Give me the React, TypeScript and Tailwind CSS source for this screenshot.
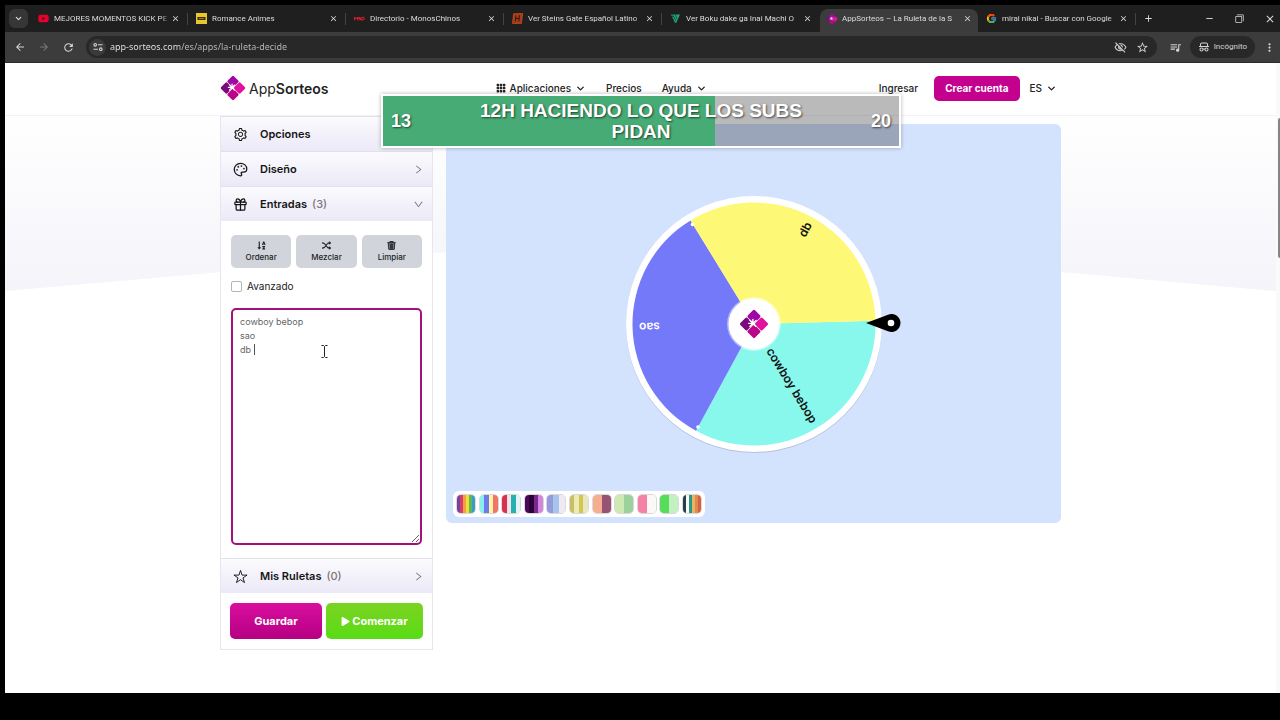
import React from "react";
import clsx from "clsx";
import { AiOutlineSetting, AiOutlineRight, AiOutlineDown } from "react-icons/ai";
import { BsGrid3X3GapFill, BsShuffle, BsTrash3 } from "react-icons/bs";
import { FaPlay, FaSortAlphaDown, FaYoutube } from "react-icons/fa";
import { FcGoogle } from "react-icons/fc";
import { IoStarOutline } from "react-icons/io5";
import {
  MdAdd,
  MdArrowBack,
  MdArrowForward,
  MdClose,
  MdFilterNone,
  MdMoreVert,
  MdOutlineVisibilityOff,
  MdQueueMusic,
  MdRefresh,
  MdRemove,
  MdStarBorder,
} from "react-icons/md";
import { RiSpyLine } from "react-icons/ri";
import { ChevronDown, Gift, Palette } from "lucide-react";

function LogoShape() {
  return (
    <g>
      <g transform="rotate(45 14 14)">
        <rect x="4.3" y="4.3" width="9.4" height="9.4" rx="1.4" fill="#9d07a6" />
        <rect x="14.3" y="4.3" width="9.4" height="9.4" rx="1.4" fill="#e2109f" />
        <rect x="4.3" y="14.3" width="9.4" height="9.4" rx="1.4" fill="#7a0a7e" />
        <rect x="14.3" y="14.3" width="9.4" height="9.4" rx="1.4" fill="#bb0488" />
      </g>
      <path
        d="M13 13.4 10.2 10.6M13 13.4l3-2.6M13 13.4H9M13 13.4l-2.8 3M13 13.4V9.8M13 13.4l2.6 2.8"
        stroke="white"
        strokeWidth="1.3"
        strokeLinecap="round"
      />
    </g>
  );
}

function Logo({ className }: { className?: string }) {
  return (
    <svg viewBox="0 0 28 28" fill="none" className={className} aria-hidden="true">
      <LogoShape />
    </svg>
  );
}

function RomanceIcon() {
  return (
    <svg viewBox="0 0 11 11" className="size-[11px]" aria-hidden="true">
      <rect width="11" height="11" fill="#e8c62f" />
      <path d="M1.5 4h8v3h-8z" fill="#3a2f08" />
      <path d="M3 5.5h5" stroke="#e8c62f" strokeWidth=".5" />
    </svg>
  );
}

function MonosIcon() {
  return (
    <svg viewBox="0 0 11 11" fill="none" className="size-[11px]" aria-hidden="true">
      <path d="M.6 7.3V4l1.6 2L3.8 4v3.3M5 7.3V4l2 3.3V4" stroke="#e0202f" strokeWidth="1" />
      <circle cx="9" cy="5.6" r="1.4" stroke="#e0202f" />
    </svg>
  );
}

function SteinsIcon() {
  return (
    <svg viewBox="0 0 11 11" fill="none" className="size-[11px]" aria-hidden="true">
      <path d="M1.5.8 10.6.4 9.5 10.4.5 10.6z" fill="#a83a14" stroke="#e2571f" strokeWidth=".6" />
      <path d="M4 2.5 3.3 8.5M7.5 2.3 6.8 8.3M3.7 5.5h3.5" stroke="#1f1f1f" strokeWidth="1" />
    </svg>
  );
}

function BokuIcon() {
  return (
    <svg viewBox="0 0 11 11" fill="none" className="size-[11px]" aria-hidden="true">
      <path d="M1 1.5h9L6.3 9.8H5z" fill="#23a67c" />
      <path d="M2.5 1.5 6 8M5.3 1.5 7 6M.8 3.5h3" stroke="#1f1f1f" strokeWidth=".6" />
    </svg>
  );
}

const tabs = [
  { title: "MEJORES MOMENTOS KICK PE", icon: <FaYoutube size={11} color="#e6002d" /> },
  { title: "Romance Animes", icon: <RomanceIcon /> },
  { title: "Directorio - MonosChinos", icon: <MonosIcon /> },
  { title: "Ver Steins Gate Español Latino", icon: <SteinsIcon /> },
  { title: "Ver Boku dake ga Inai Machi O", icon: <BokuIcon /> },
  { title: "AppSorteos – La Ruleta de la S", icon: <Logo className="size-3" />, active: true },
  { title: "mirai nikai - Buscar con Google", icon: <FcGoogle size={11} /> },
];

function BrowserTabs() {
  return (
    <div className="flex h-[27px] items-center bg-[#1f1f1f] pl-1 font-['Roboto'] text-[#dcdcdc]">
      <button aria-label="Buscar pestañas" className="mr-[2px] flex size-[19px] shrink-0 items-center justify-center rounded-md bg-[#363636]">
        <ChevronDown size={9} strokeWidth={3} />
      </button>
      {tabs.map((tab, i) => (
        <div
          key={tab.title}
          className={clsx(
            "flex w-[158px] shrink-0 items-center self-stretch",
            tab.active ? "mt-1 rounded-t-lg bg-[#3c3c3c] pr-[6px] pb-1 pl-[6px]" : "pl-[8px]",
          )}
        >
          <span className="flex w-4 shrink-0">{tab.icon}</span>
          <span className="min-w-0 flex-1 overflow-hidden whitespace-nowrap text-[8px] [mask-image:linear-gradient(to_right,black_92%,transparent)]">
            {tab.title}
          </span>
          <button aria-label="Cerrar pestaña" className="ml-px shrink-0">
            <MdClose size={9} />
          </button>
          {!tab.active && i !== 4 && <span className="ml-[7px] h-3 w-px bg-[#444]" />}
          {i === 4 && <span className="ml-2" />}
        </div>
      ))}
      <button aria-label="Nueva pestaña" className="ml-[7px]">
        <MdAdd size={11} />
      </button>
      <div className="ml-auto flex items-center gap-5 pr-1">
        <button aria-label="Minimizar"><MdRemove size={11} /></button>
        <button aria-label="Restaurar"><MdFilterNone size={9} className="rotate-180" /></button>
        <button aria-label="Cerrar"><MdClose size={12} /></button>
      </div>
    </div>
  );
}

function AddressBar() {
  return (
    <div className="flex h-[31px] items-center border-b border-[#2c2c2c] bg-[#3c3c3c] pl-[9px] pr-1 text-[#d4d4d4]">
      <button aria-label="Atrás"><MdArrowBack size={12} /></button>
      <button aria-label="Adelante" className="ml-3 text-[#777]"><MdArrowForward size={12} /></button>
      <button aria-label="Recargar" className="ml-3"><MdRefresh size={13} /></button>
      <div className="ml-[11px] flex h-[22px] flex-1 items-center rounded-full bg-[#282828] pl-[3px] pr-2">
        <span className="flex size-[17px] items-center justify-center rounded-full bg-[#3a3a3a]">
          <svg viewBox="0 0 10 10" fill="none" stroke="currentColor" strokeWidth="1.1" className="size-[10px]" aria-hidden="true">
            <circle cx="2.2" cy="2.8" r="1.3" />
            <path d="M5 2.8h4.5M.5 7.2H5" />
            <circle cx="7.8" cy="7.2" r="1.3" />
          </svg>
        </span>
        <input
          aria-label="Dirección"
          defaultValue="app-sorteos.com/es/apps/la-ruleta-decide"
          className="ml-1 min-w-0 flex-1 bg-[linear-gradient(to_right,#ececec_70px,#bdbdbd_70px)] bg-clip-text text-[9px] text-transparent outline-none"
        />
        <button aria-label="Cookies bloqueadas"><MdOutlineVisibilityOff size={13} /></button>
        <button aria-label="Favoritos" className="ml-[9px]"><MdStarBorder size={13} /></button>
      </div>
      <button aria-label="Multimedia" className="ml-3"><MdQueueMusic size={13} /></button>
      <button className="ml-2 flex h-[22px] items-center gap-1 rounded-full bg-[#282828] px-2 font-['Roboto'] text-[8px]">
        <RiSpyLine size={12} />
        Incógnito
      </button>
      <button aria-label="Más" className="ml-2"><MdMoreVert size={13} /></button>
    </div>
  );
}

function Header() {
  return (
    <header className="border-b border-[#f3f3f6] bg-white">
      <div className="mx-auto flex h-[52px] max-w-[841px] items-center justify-between pb-[2px] text-[10px] font-medium text-[#222]">
        <a href="#" className="flex items-center gap-[3px] text-[14px] font-normal">
          <Logo className="size-[26px]" />
          <span>
            App<span className="font-semibold">Sorteos</span>
          </span>
        </a>
        <nav className="flex items-center gap-5 pr-[5px]">
          <a href="#" className="flex items-center gap-1">
            <BsGrid3X3GapFill size={10} />
            Aplicaciones
            <ChevronDown size={11} strokeWidth={3} />
          </a>
          <a href="#">Precios</a>
          <a href="#" className="flex items-center gap-1">
            Ayuda
            <ChevronDown size={11} strokeWidth={3} />
          </a>
        </nav>
        <div className="flex items-center">
          <a href="#">Ingresar</a>
          <button className="ml-4 h-[25px] rounded-[5px] bg-[#c4008f] px-[11px] font-bold text-white">Crear cuenta</button>
          <button className="ml-[10px] mr-1 flex items-center gap-1">
            ES
            <ChevronDown size={11} strokeWidth={3} />
          </button>
        </div>
      </div>
    </header>
  );
}

type SectionRowProps = {
  icon: React.ReactNode;
  title: string;
  count?: number;
  open?: boolean;
};

function SectionRow({ icon, title, count, open }: SectionRowProps) {
  return (
    <button
      aria-expanded={!!open}
      className="flex h-[35px] w-full items-center border-t border-[#e2e1ec] bg-linear-to-b from-[#fbfbfe] to-[#ebe9f7] px-2 text-[11px] font-semibold text-[#151515]"
    >
      <span className="ml-1 w-[27px] pt-px">{icon}</span>
      {title}
      {count !== undefined && <span className="ml-[5px] font-medium text-[#777]">({count})</span>}
      <span className="ml-auto text-[#777]">
        {open ? <AiOutlineDown size={11} /> : <AiOutlineRight size={11} />}
      </span>
    </button>
  );
}

function ToolButton({ icon, label }: { icon: React.ReactNode; label: string }) {
  return (
    <button className="flex h-[33px] flex-1 flex-col items-center justify-center gap-[2px] rounded-[5px] bg-[#d1d4da] text-[8px] leading-[11px] font-medium text-[#1c1f26]">
      {icon}
      {label}
    </button>
  );
}

function Sidebar() {
  return (
    <aside className="w-[213px] shrink-0 border-x border-b border-[#e6e6ef] bg-white">
      <SectionRow icon={<AiOutlineSetting size={15} />} title="Opciones" />
      <SectionRow icon={<Palette size={15} strokeWidth={2} />} title="Diseño" />
      <SectionRow icon={<Gift size={15} strokeWidth={2} />} title="Entradas" count={3} open />
      <div className="px-[10px] pt-[14px] pb-[13px]">
        <div className="flex gap-[5px]">
          <ToolButton icon={<FaSortAlphaDown size={9} />} label="Ordenar" />
          <ToolButton icon={<BsShuffle size={9} strokeWidth={1} />} label="Mezclar" />
          <ToolButton icon={<BsTrash3 size={9} strokeWidth={1} />} label="Limpiar" />
        </div>
        <label className="mt-3 flex items-center gap-[5px] text-[10px] leading-3 text-[#222]">
          <input type="checkbox" className="size-[11px] appearance-none rounded-[2px] border border-[#b5b5b5] bg-white" />
          Avanzado
        </label>
        <div className="relative mt-4">
          <textarea
            aria-label="Entradas"
            spellCheck={false}
            defaultValue={"cowboy bebop\nsao\ndb "}
            className="block h-[237px] w-full rounded-[5px] border-2 border-[#a3127b] px-[7px] py-[5px] text-[9px] leading-[14px] text-[#666] outline-none"
          />
          <span className="absolute top-9 left-[23px] h-[11px] w-px bg-[#555]" />
          <svg viewBox="0 0 7 13" fill="none" stroke="#222" className="absolute top-[37px] left-[90px] h-[13px] w-[7px]" aria-hidden="true">
            <path d="M.5.5h2l1 1 1-1h2M3.5 1.5v10M.5 12.5h2l1-1 1 1h2" />
          </svg>
        </div>
      </div>
      <SectionRow icon={<IoStarOutline size={15} />} title="Mis Ruletas" count={0} />
      <div className="flex gap-1 px-[9px] py-[10px] text-[11px] font-bold text-white">
        <button className="h-9 w-[92px] rounded-[5px] bg-linear-to-b from-[#d90f9f] to-[#b50082]">Guardar</button>
        <button className="flex h-9 flex-1 items-center justify-center gap-[2px] rounded-[5px] bg-linear-to-b from-[#7ad321] to-[#57dc14]">
          <FaPlay size={9} />
          Comenzar
        </button>
      </div>
    </aside>
  );
}

const slices = [
  { label: "cowboy bebop", color: "#88f8ec", text: "#111", angle: 58.5 },
  { label: "sao", color: "#7379f8", text: "#fff", angle: 178.5 },
  { label: "db", color: "#fef877", text: "#111", angle: 298.5 },
];

function Wheel() {
  return (
    <svg viewBox="-150 -150 300 300" className="size-[300px]" role="img" aria-label="Ruleta">
      <circle cy="1" r="128" fill="#b4c3de" />
      <circle r="128" fill="white" />
      {slices.map((s) => (
        <g key={s.label} transform={`rotate(${s.angle})`}>
          <path d="M0 0 60.75-105.22A121.5 121.5 0 0 1 60.75 105.22Z" fill={s.color} />
          <text x="115" y="4" textAnchor="end" fontSize="12" fontWeight="600" fill={s.text}>
            {s.label}
          </text>
        </g>
      ))}
      <circle cx="-61.5" cy="-99.5" r="1.8" fill="white" />
      <circle cx="-56" cy="103" r="1.8" fill="white" />
      <circle r="27" fill="white" fillOpacity=".45" />
      <circle r="25.5" fill="white" />
      <g transform="translate(-15 -15) scale(1.07)" fill="none">
        <LogoShape />
      </g>
      <path d="M112-1 134-9.3A9 9 0 1 1 134 7.3Z" fill="black" />
      <circle cx="137" cy="-1" r="3.3" fill="white" />
    </svg>
  );
}

const palettes = [
  ["#7b3fa0", "#d63a6e", "#f0a23a", "#f2dc3c", "#5cb85a", "#3a9ec0"],
  ["#88f0ec", "#6f78ee", "#fdf5a0", "#f2736a"],
  ["#d9304f", "#f3e3ee", "#27b0b0", "#e4f4f6"],
  ["#4a0a5a", "#2c0238", "#7a2790", "#cf86dc"],
  ["#949bdc", "#a6c4ec", "#efeaf2"],
  ["#c9c066", "#eeeab4", "#cfc850", "#e9e6c0"],
  ["#f7ad90", "#985276"],
  ["#cfe9b4", "#9bd29c"],
  ["#f481a8", "#fbf8f7"],
  ["#58dc5c", "#c2f0be"],
  ["#25404c", "#fbfbf4", "#2f9686", "#e3b566", "#e08a4e", "#d8603f"],
];

function PalettePicker() {
  return (
    <div className="absolute bottom-[6px] left-[7px] flex w-[252px] justify-between rounded-[6px] bg-white p-[3px]">
      {palettes.map((colors, i) => (
        <button key={i} aria-label={`Paleta ${i + 1}`} className="flex size-5 overflow-hidden rounded-[5px] border border-[#d9d9d9]">
          {colors.map((c) => (
            <span key={c} className="h-full flex-1" style={{ backgroundColor: c }} />
          ))}
        </button>
      ))}
    </div>
  );
}

function GoalOverlay() {
  return (
    <div className="absolute top-[94px] left-1/2 ml-px flex h-[54px] w-[520px] -translate-x-1/2 items-center justify-between border-2 border-white bg-[linear-gradient(to_right,#47ab75_332px,rgba(0,0,0,0.27)_332px)] bg-clip-padding px-2 font-['Liberation_Sans'] text-[18px] leading-[21px] font-bold text-white shadow-[0_0_4px_rgba(0,0,0,0.3)] [text-shadow:1px_1px_2px_rgba(0,0,0,0.6)]">
      <span>13</span>
      <span className="w-[340px] text-center text-[19px]">12H HACIENDO LO QUE LOS SUBS PIDAN</span>
      <span>20</span>
    </div>
  );
}

function App() {
  return (
    <div className="relative min-h-screen bg-black pt-[5px] pb-[27px] pl-[5px] font-['Noto_Sans',sans-serif]">
      <BrowserTabs />
      <AddressBar />
      <div className="flex bg-white font-['Inter',sans-serif]">
        <div className="relative h-[calc(100vh-90px)] min-w-0 flex-1 overflow-hidden">
          <Header />
          <div className="absolute inset-x-0 top-[53px] h-[175px] bg-linear-to-b from-white to-[#f4f4fa] [clip-path:polygon(0_0,100%_0,100%_100%,50%_68%,0_100%)]" />
          <main className="relative mx-auto flex max-w-[841px] items-start gap-[13px]">
            <Sidebar />
            <section className="relative mt-2 flex h-[399px] flex-1 items-center justify-center rounded-[6px] bg-[#d3e2fd]">
              <Wheel />
              <PalettePicker />
            </section>
          </main>
        </div>
        <div className="w-1 bg-[#fafafa] pt-[55px]">
          <div className="ml-[2px] h-[140px] rounded-l-sm bg-[#858585]" />
        </div>
      </div>
      <GoalOverlay />
    </div>
  );
}

export default App;
